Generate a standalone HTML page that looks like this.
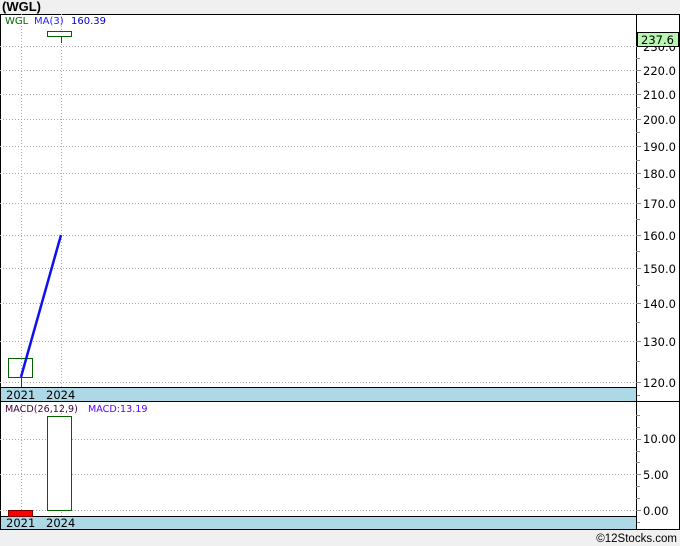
<!DOCTYPE html>
<html><head><meta charset="utf-8"><style>
html,body{margin:0;padding:0;background:#f0f0f0;}
svg{display:block;font-family:"Liberation Sans","DejaVu Sans",sans-serif;}
</style></head><body>
<svg width="680" height="546" viewBox="0 0 680 546" xmlns="http://www.w3.org/2000/svg">
<rect x="0" y="0" width="680" height="546" fill="#f0f0f0"/>
<text x="2" y="11" font-size="13" font-weight="bold" fill="#000">(WGL)</text>
<rect x="0.5" y="14.5" width="679" height="515" fill="#fff" stroke="#000"/>
<g stroke="#aaa" stroke-dasharray="1,2" stroke-width="1">
<line x1="0" y1="46.5" x2="636" y2="46.5"/>
<line x1="0" y1="70.5" x2="636" y2="70.5"/>
<line x1="0" y1="94.5" x2="636" y2="94.5"/>
<line x1="0" y1="119.5" x2="636" y2="119.5"/>
<line x1="0" y1="146.5" x2="636" y2="146.5"/>
<line x1="0" y1="173.5" x2="636" y2="173.5"/>
<line x1="0" y1="203.5" x2="636" y2="203.5"/>
<line x1="0" y1="235.5" x2="636" y2="235.5"/>
<line x1="0" y1="268.5" x2="636" y2="268.5"/>
<line x1="0" y1="303.5" x2="636" y2="303.5"/>
<line x1="0" y1="341.5" x2="636" y2="341.5"/>
<line x1="0" y1="382.5" x2="636" y2="382.5"/>
<line x1="0" y1="439.5" x2="636" y2="439.5"/>
<line x1="0" y1="474.5" x2="636" y2="474.5"/>
<line x1="0" y1="510.5" x2="636" y2="510.5"/>
<line x1="21.5" y1="14" x2="21.5" y2="516"/>
<line x1="61.5" y1="14" x2="61.5" y2="516"/>
</g>
<line x1="636.5" y1="14" x2="636.5" y2="530" stroke="#000"/>
<g fill="#000" font-size="11.5" font-family="DejaVu Sans, sans-serif">
<text x="643" y="51">230.0</text>
<text x="643" y="75">220.0</text>
<text x="643" y="99">210.0</text>
<text x="643" y="124">200.0</text>
<text x="643" y="151">190.0</text>
<text x="643" y="178">180.0</text>
<text x="643" y="208">170.0</text>
<text x="643" y="240">160.0</text>
<text x="643" y="273">150.0</text>
<text x="643" y="308">140.0</text>
<text x="643" y="346">130.0</text>
<text x="643" y="387">120.0</text>
<text x="643" y="443">10.00</text>
<text x="643" y="479">5.00</text>
<text x="643" y="515">0.00</text>
</g>
<g stroke="#888">
<line x1="636" y1="46.5" x2="641" y2="46.5"/><line x1="636" y1="58.5" x2="640" y2="58.5"/>
<line x1="636" y1="70.5" x2="641" y2="70.5"/><line x1="636" y1="82.5" x2="640" y2="82.5"/>
<line x1="636" y1="94.5" x2="641" y2="94.5"/><line x1="636" y1="107.5" x2="640" y2="107.5"/>
<line x1="636" y1="119.5" x2="641" y2="119.5"/><line x1="636" y1="132.5" x2="640" y2="132.5"/>
<line x1="636" y1="146.5" x2="641" y2="146.5"/><line x1="636" y1="160.5" x2="640" y2="160.5"/>
<line x1="636" y1="173.5" x2="641" y2="173.5"/><line x1="636" y1="188.5" x2="640" y2="188.5"/>
<line x1="636" y1="203.5" x2="641" y2="203.5"/><line x1="636" y1="219.5" x2="640" y2="219.5"/>
<line x1="636" y1="235.5" x2="641" y2="235.5"/><line x1="636" y1="251.5" x2="640" y2="251.5"/>
<line x1="636" y1="268.5" x2="641" y2="268.5"/><line x1="636" y1="285.5" x2="640" y2="285.5"/>
<line x1="636" y1="303.5" x2="641" y2="303.5"/><line x1="636" y1="322.5" x2="640" y2="322.5"/>
<line x1="636" y1="341.5" x2="641" y2="341.5"/><line x1="636" y1="361.5" x2="640" y2="361.5"/>
<line x1="636" y1="382.5" x2="641" y2="382.5"/><line x1="636" y1="395.5" x2="640" y2="395.5"/>
<line x1="636" y1="415.5" x2="640" y2="415.5"/><line x1="636" y1="427.5" x2="640" y2="427.5"/>
<line x1="636" y1="439.5" x2="641" y2="439.5"/><line x1="636" y1="451.5" x2="640" y2="451.5"/>
<line x1="636" y1="462.5" x2="640" y2="462.5"/><line x1="636" y1="474.5" x2="641" y2="474.5"/>
<line x1="636" y1="486.5" x2="640" y2="486.5"/><line x1="636" y1="498.5" x2="640" y2="498.5"/>
<line x1="636" y1="510.5" x2="641" y2="510.5"/><line x1="636" y1="522.5" x2="640" y2="522.5"/>
</g>
<rect x="637.5" y="32.5" width="41" height="14" fill="#b8f5b0" stroke="#000"/>
<text x="641" y="44" font-size="11.5" font-family="DejaVu Sans, sans-serif" fill="#000">237.6</text>
<rect x="0.5" y="387.5" width="636" height="14" fill="#add8e6" stroke="#000"/>
<rect x="0.5" y="516.5" width="636" height="13" fill="#add8e6" stroke="#000"/>
<line x1="0" y1="401.5" x2="680" y2="401.5" stroke="#000"/>
<g font-size="11.5" font-family="DejaVu Sans, sans-serif" fill="#000">
<text x="6" y="399">2021</text><text x="46" y="399">2024</text>
<text x="6" y="527">2021</text><text x="46" y="527">2024</text>
</g>
<text x="5" y="24" font-size="10" font-family="DejaVu Sans, sans-serif" fill="#006400">WGL</text>
<text x="34" y="24" font-size="10" font-family="DejaVu Sans, sans-serif" fill="#2020ff">MA(3)</text>
<text x="71" y="24" font-size="10" font-family="DejaVu Sans, sans-serif" fill="#0000cc">160.39</text>
<text x="5" y="412" font-size="9.6" font-family="DejaVu Sans, sans-serif" fill="#400040">MACD(26,12,9)</text>
<text x="88" y="412" font-size="9.6" font-family="DejaVu Sans, sans-serif" fill="#6000ff">MACD:13.19</text>
<line x1="21.5" y1="377" x2="21.5" y2="387" stroke="#006400"/>
<rect x="8.5" y="358.5" width="24" height="19" fill="none" stroke="#006400"/>
<line x1="61.5" y1="36" x2="61.5" y2="43" stroke="#006400"/>
<rect x="47.5" y="31.5" width="24" height="5" fill="#fff" stroke="#006400"/>
<line x1="21" y1="377" x2="61" y2="235" stroke="#1010ee" stroke-width="2.5"/>
<rect x="8.5" y="510.5" width="24" height="6" fill="#ff0000" stroke="#800000"/>
<rect x="47.5" y="416.5" width="24" height="94" fill="#fff" stroke="#006400"/>
<text x="677" y="542" font-size="11.5" text-anchor="end" fill="#000">©12Stocks.com</text>
</svg>
</body></html>
